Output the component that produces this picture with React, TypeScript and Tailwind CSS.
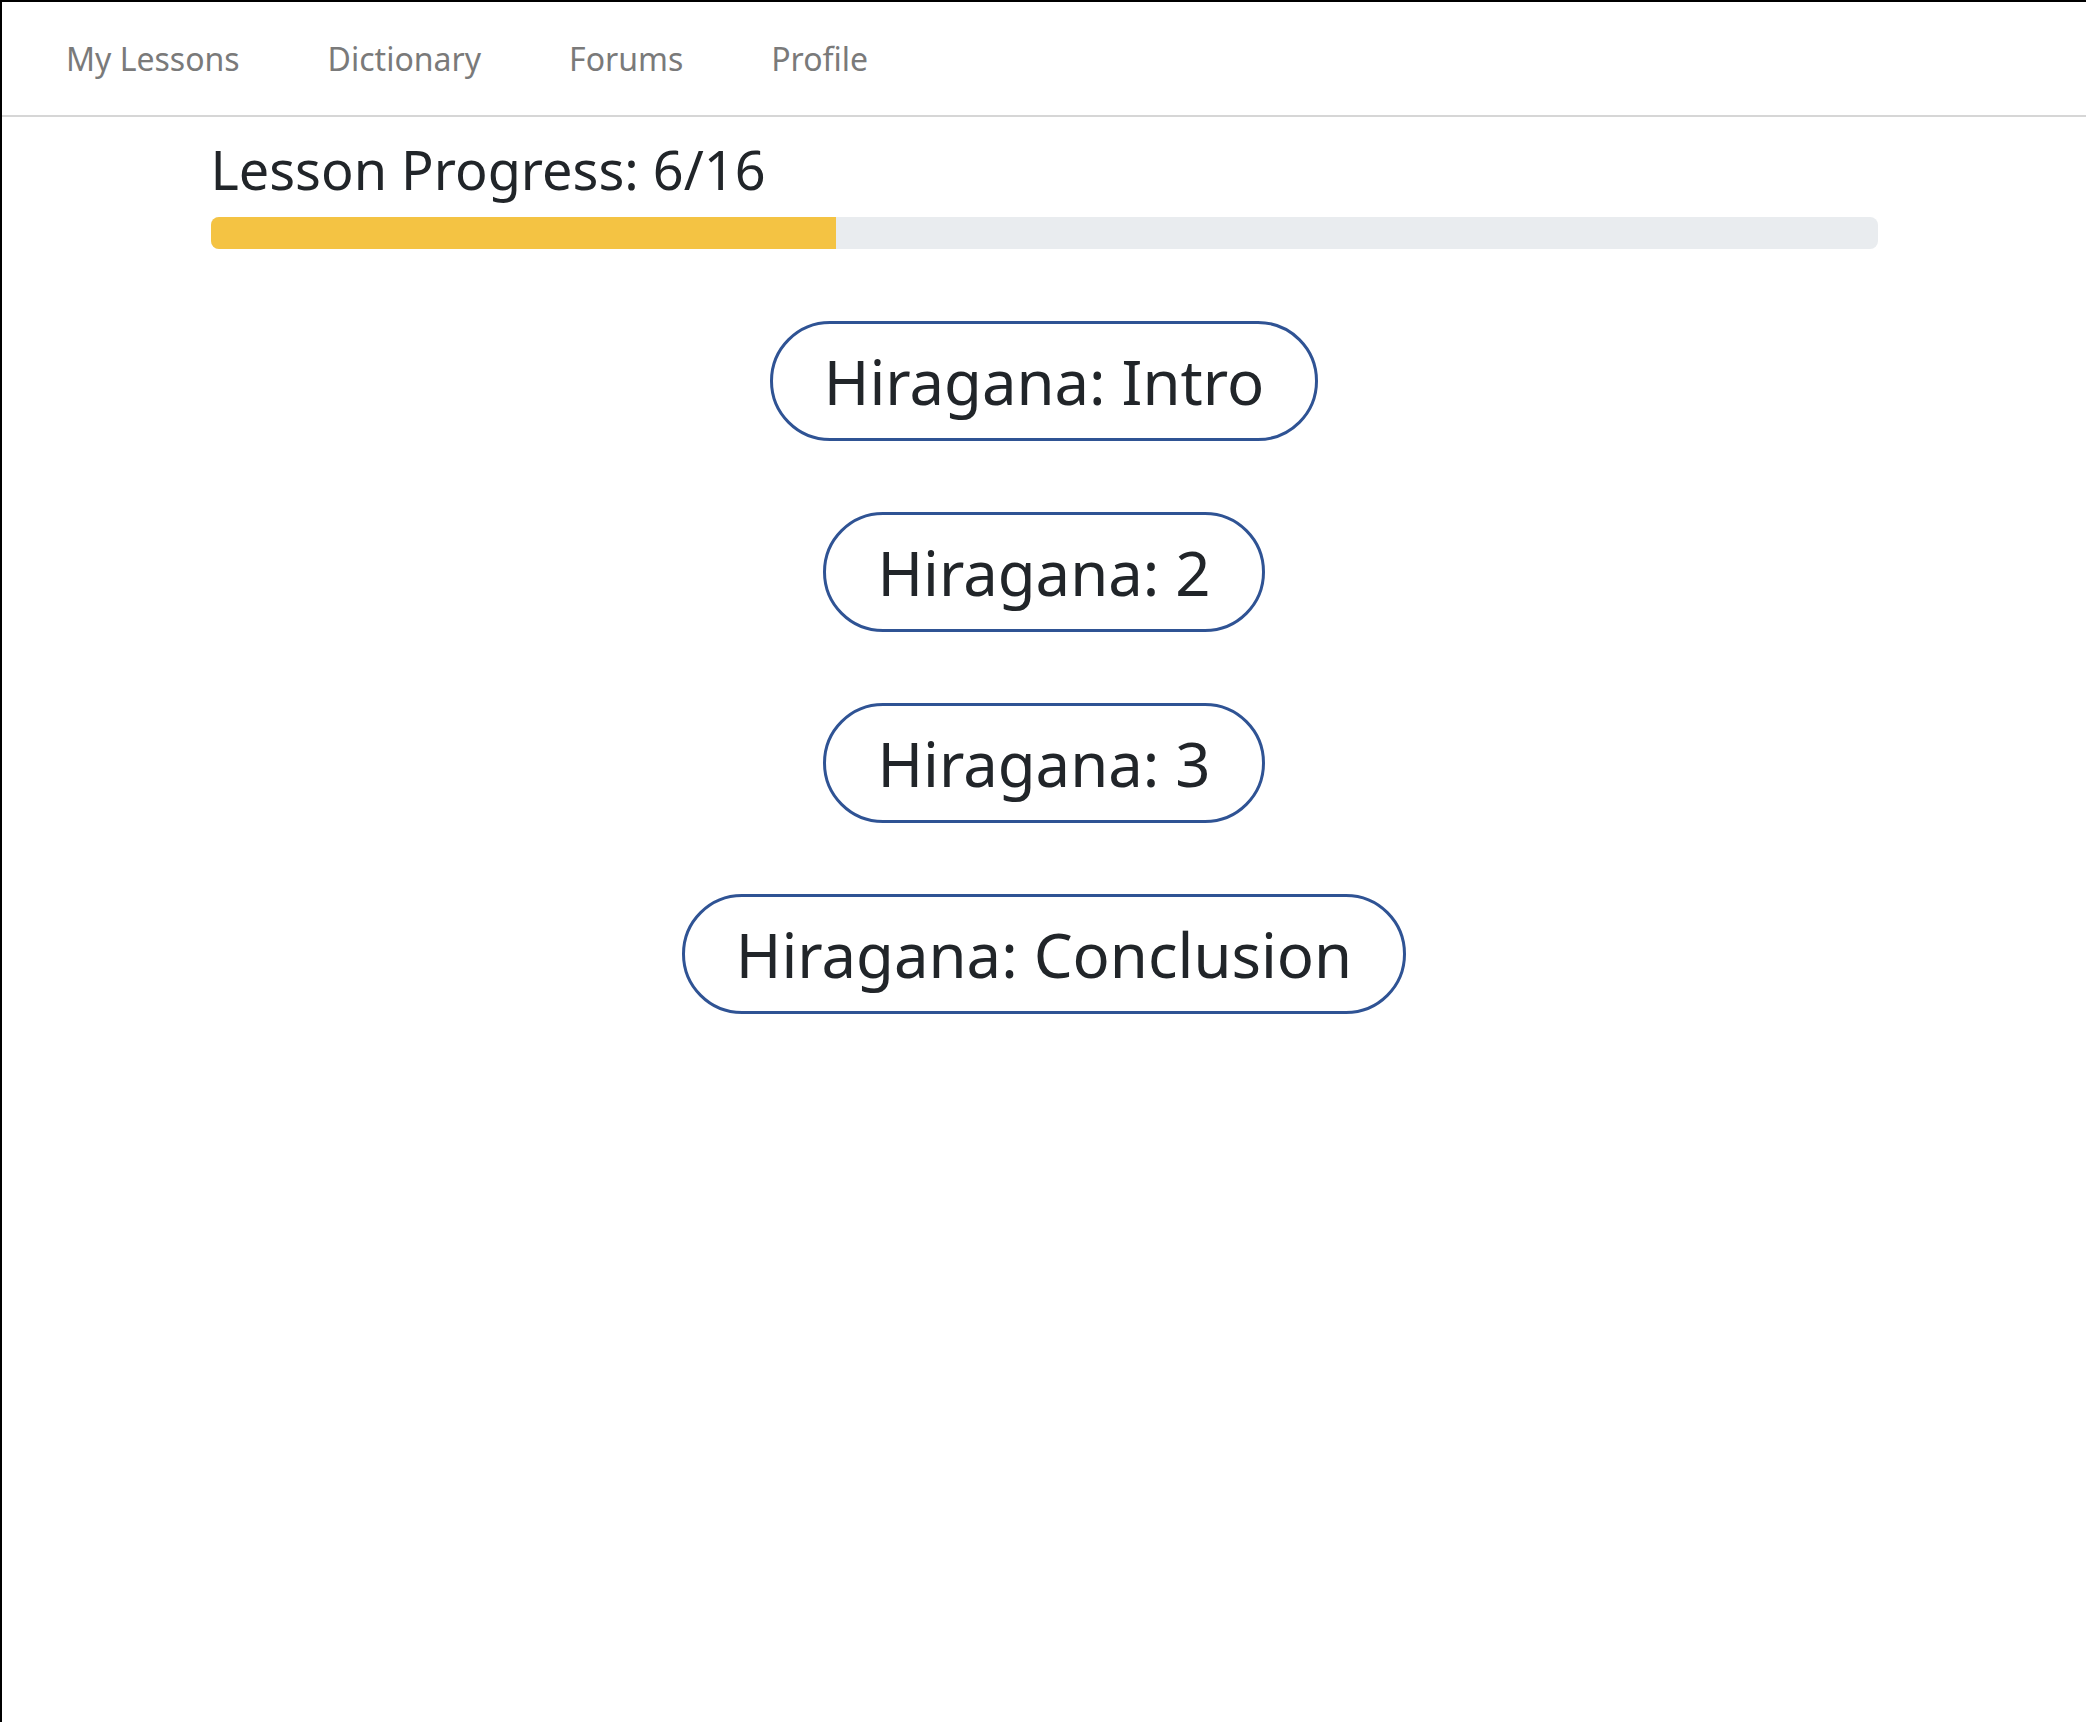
import React from 'react';

const navLinks = ['My Lessons', 'Dictionary', 'Forums', 'Profile'];

const lessons = ['Hiragana: Intro', 'Hiragana: 2', 'Hiragana: 3', 'Hiragana: Conclusion'];

export default function App() {
  const done = 6;
  const total = 16;

  return (
    <div
      className="min-h-screen w-full bg-white border-t-2 border-l-2 border-black text-[#212529]"
      style={{ fontFamily: '"Noto Sans", "Open Sans", sans-serif' }}
    >
      <nav className="h-[115px] flex items-center pl-[64px] gap-[88px] border-b-2 border-[#d6d6d6]">
        {navLinks.map((link) => (
          <a key={link} href="#" className="text-[32px] leading-none text-[#7a7a7a]">
            {link}
          </a>
        ))}
      </nav>

      <div className="w-[1667px] mx-auto">
        <h3 className="mt-[19px] text-[54px] leading-[1.24] font-normal">
          Lesson Progress: {done}/{total}
        </h3>
        <div className="mt-[14px] h-8 w-full rounded-lg bg-[#e9ecef] overflow-hidden flex">
          <div className="h-full bg-[#f4c343]" style={{ width: `${(done / total) * 100}%` }} />
        </div>

        <div className="mt-[72px] flex flex-col items-center gap-[71px]">
          {lessons.map((lesson) => (
            <button
              key={lesson}
              className="h-[120px] px-[51px] flex items-center justify-center rounded-full border-[3px] border-[#2f5394] bg-white text-[61.6px] leading-[1.5] text-[#212529]"
            >
              {lesson}
            </button>
          ))}
        </div>
      </div>
    </div>
  );
}
